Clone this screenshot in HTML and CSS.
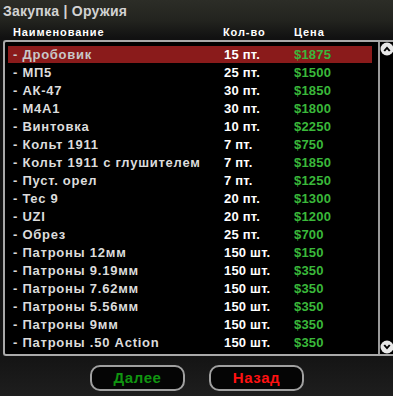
FILE: index.html
```html
<!DOCTYPE html>
<html lang="ru">
<head>
<meta charset="utf-8">
<link rel="stylesheet" href="styles.css">
</head>
<body>
<div class="screen">
  <div class="title">Закупка | Оружия</div>
  <div class="cols">
    <span class="c-name">Наименование</span>
    <span class="c-qty">Кол-во</span>
    <span class="c-price">Цена</span>
  </div>
  <div class="box">
    <div class="list">
      <div class="row sel"><span class="name">- Дробовик</span><span class="qty">15 пт.</span><span class="price">$1875</span></div>
      <div class="row"><span class="name">- МП5</span><span class="qty">25 пт.</span><span class="price">$1500</span></div>
      <div class="row"><span class="name">- АК-47</span><span class="qty">30 пт.</span><span class="price">$1850</span></div>
      <div class="row"><span class="name">- М4А1</span><span class="qty">30 пт.</span><span class="price">$1800</span></div>
      <div class="row"><span class="name">- Винтовка</span><span class="qty">10 пт.</span><span class="price">$2250</span></div>
      <div class="row"><span class="name">- Кольт 1911</span><span class="qty">7 пт.</span><span class="price">$750</span></div>
      <div class="row"><span class="name">- Кольт 1911 с глушителем</span><span class="qty">7 пт.</span><span class="price">$1850</span></div>
      <div class="row"><span class="name">- Пуст. орел</span><span class="qty">7 пт.</span><span class="price">$1250</span></div>
      <div class="row"><span class="name">- Tec 9</span><span class="qty">20 пт.</span><span class="price">$1300</span></div>
      <div class="row"><span class="name">- UZI</span><span class="qty">20 пт.</span><span class="price">$1200</span></div>
      <div class="row"><span class="name">- Обрез</span><span class="qty">25 пт.</span><span class="price">$700</span></div>
      <div class="row"><span class="name">- Патроны 12мм</span><span class="qty">150 шт.</span><span class="price">$150</span></div>
      <div class="row"><span class="name">- Патроны 9.19мм</span><span class="qty">150 шт.</span><span class="price">$350</span></div>
      <div class="row"><span class="name">- Патроны 7.62мм</span><span class="qty">150 шт.</span><span class="price">$350</span></div>
      <div class="row"><span class="name">- Патроны 5.56мм</span><span class="qty">150 шт.</span><span class="price">$350</span></div>
      <div class="row"><span class="name">- Патроны 9мм</span><span class="qty">150 шт.</span><span class="price">$350</span></div>
      <div class="row"><span class="name">- Патроны .50 Action</span><span class="qty">150 шт.</span><span class="price">$350</span></div>
    </div>
    <div class="scroll">
      <svg class="arrow" width="14" height="14" viewBox="0 0 14 14"><circle cx="7" cy="7" r="6.5" fill="#e8e8e8"/><path d="M3.5 8.5 L7 4.5 L10.5 8.5 L9 9.5 L7 7.2 L5 9.5 Z" fill="#000"/></svg>
      <svg class="arrow" width="14" height="14" viewBox="0 0 14 14"><circle cx="7" cy="7" r="6.5" fill="#e8e8e8"/><path d="M3.5 5.5 L7 9.5 L10.5 5.5 L9 4.5 L7 6.8 L5 4.5 Z" fill="#000"/></svg>
    </div>
  </div>
  <div class="buttons">
    <div class="btn next">Далее</div>
    <div class="btn back">Назад</div>
  </div>
</div>
</body>
</html>
```

FILE: styles.css
```css
html, body {
  margin: 0;
  padding: 0;
}
body {
  width: 393px;
  height: 396px;
  overflow: hidden;
  background: #181818;
  font-family: "Liberation Sans", Arial, sans-serif;
  font-weight: bold;
}
.screen {
  width: 393px;
  height: 396px;
  background:
    linear-gradient(180deg, #2c2d27 0px, #23241f 20px, #111111 38px, #141414 356px, #1e1e1e 396px);
  display: flex;
  flex-direction: column;
}
.title {
  height: 24px;
  padding: 3px 0 0 3px;
  box-sizing: border-box;
  font-size: 14px;
  line-height: 17px;
  letter-spacing: 0.25px;
  color: #d2d2d2;
}
.cols {
  display: flex;
  height: 16px;
  font-size: 11px;
  line-height: 12px;
  letter-spacing: 0.9px;
  color: #ffffff;
  padding-top: 2px;
  box-sizing: border-box;
}
.c-name { width: 223px; padding-left: 13px; box-sizing: border-box; }
.c-qty { width: 71px; }
.box {
  margin-left: 3px;
  width: 390px;
  height: 316px;
  box-sizing: border-box;
  border-top: 2px solid #a9a9a9;
  border-left: 2px solid #a9a9a9;
  border-bottom: 2px solid #a9a9a9;
  border-radius: 3px 0 0 3px;
  background: #000;
  display: flex;
}
.list {
  flex: 1;
  padding: 4px 6px 0 3px;
  font-size: 13px;
}
.row {
  display: flex;
  height: 17px;
  margin-bottom: 1px;
  line-height: 17px;
}
.row.sel { background: #8a1b1b; }
.name {
  width: 216px;
  box-sizing: border-box;
  padding-left: 5px;
  color: #dcdcdc;
  letter-spacing: 0.75px;
  white-space: nowrap;
}
.sel .name { color: #c8c8c8; }
.qty { width: 70px; color: #ffffff; letter-spacing: 0.2px; }
.price { color: #3ab83a; letter-spacing: 0.2px; }
.scroll {
  width: 13px;
  border-left: 2px solid #9a9a9a;
  display: flex;
  flex-direction: column;
  justify-content: space-between;
}
.arrow { display: block; }
.buttons {
  display: flex;
  gap: 24px;
  padding: 9px 0 0 90px;
}
.btn {
  width: 95px;
  height: 26px;
  box-sizing: border-box;
  border: 2px solid #a0a0a0;
  border-radius: 10px;
  background: #050505;
  text-align: center;
  font-size: 15px;
  line-height: 22px;
  letter-spacing: 0.6px;
}
.next { color: #109510; }
.back { color: #ff1111; }
```
